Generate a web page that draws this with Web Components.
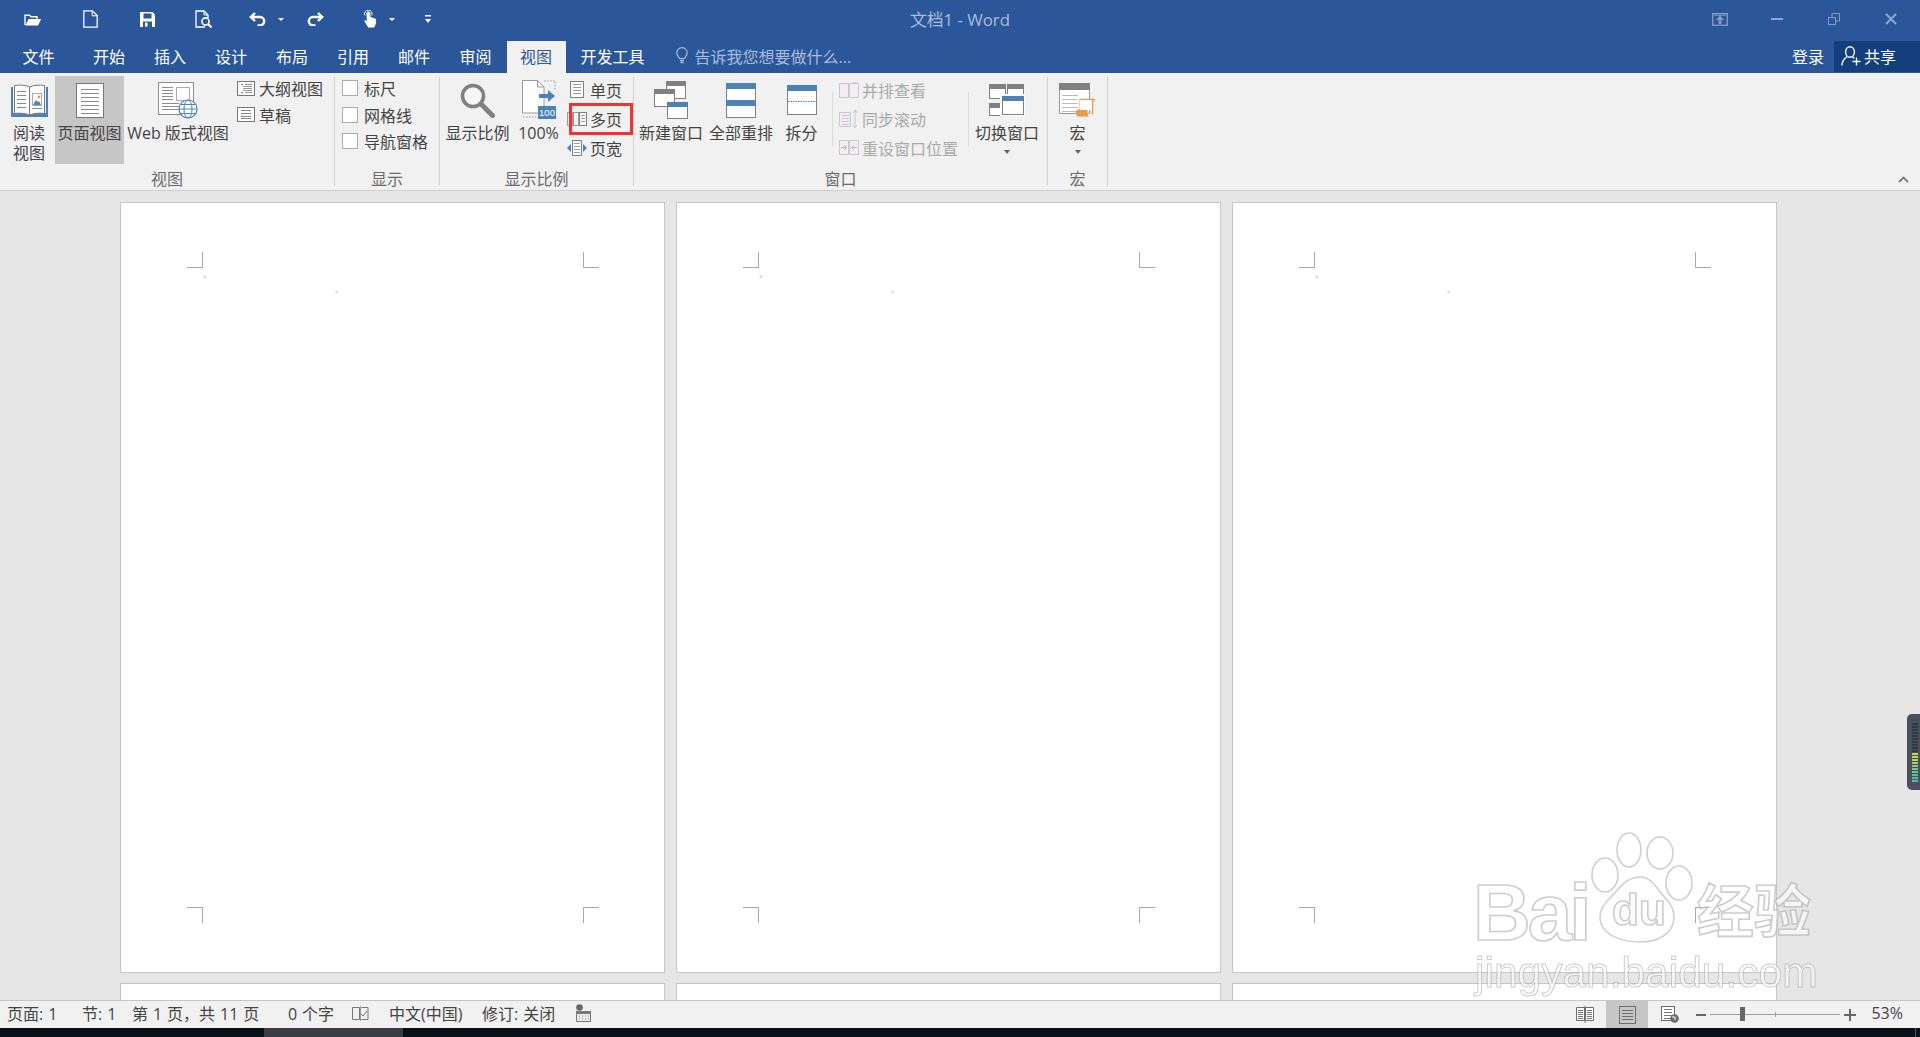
<!DOCTYPE html>
<html lang="zh"><head><meta charset="utf-8"><title>文档1 - Word</title>
<style>
html,body{margin:0;height:100%;overflow:hidden}
body{display:flex;flex-direction:column;position:relative;font:16px "Open Sans","Noto Sans CJK SC",sans-serif;color:#444;background:#e6e6e6}
</style></head><body>
<word-titlebar>
  <w-icon slot="qat" name="folder" style="margin-left:24px"></w-icon>
  <w-icon slot="qat" name="newdoc" style="margin-left:41px"></w-icon>
  <w-icon slot="qat" name="save" style="margin-left:42px"></w-icon>
  <w-icon slot="qat" name="preview" style="margin-left:40px"></w-icon>
  <w-icon slot="qat" name="undo" style="margin-left:36px"></w-icon>
  <w-icon slot="qat" name="caretw" style="margin-left:12px"></w-icon>
  <w-icon slot="qat" name="redo" style="margin-left:23px"></w-icon>
  <w-icon slot="qat" name="touch" style="margin-left:39px"></w-icon>
  <w-icon slot="qat" name="caretw" style="margin-left:12px"></w-icon>
  <w-icon slot="qat" name="custom" style="margin-left:30px"></w-icon>
  文档1 - Word
  <w-icon slot="win" name="ribbonopt" style="margin-right:43px"></w-icon>
  <w-icon slot="win" name="min" style="margin-right:45px"></w-icon>
  <w-icon slot="win" name="restore" style="margin-right:45px"></w-icon>
  <w-icon slot="win" name="close" style="margin-right:23px"></w-icon>
</word-titlebar>
<word-tabs>
  <w-tab style="--w:61px;margin-right:9.5px">文件</w-tab>
  <w-tab>开始</w-tab><w-tab>插入</w-tab><w-tab>设计</w-tab><w-tab>布局</w-tab><w-tab>引用</w-tab><w-tab>邮件</w-tab><w-tab style="--w:62px">审阅</w-tab>
  <w-tab active style="--w:59px">视图</w-tab>
  <w-tab style="--w:94px">开发工具</w-tab>
  <span slot="tell">告诉我您想要做什么...</span>
</word-tabs>
<word-ribbon>
  <rb-group label="视图" style="--g:334px;--p:4px">
    <rb-large style="--w:50px"><w-icon slot="icon" name="book"></w-icon>阅读<br>视图</rb-large>
    <rb-large active style="--w:69px;margin-left:1px"><w-icon slot="icon" name="page"></w-icon>页面视图</rb-large>
    <rb-large style="--w:106px;margin-left:1px"><w-icon slot="icon" name="web"></w-icon>Web 版式视图</rb-large>
    <rb-col style="margin-left:6px;--h:26.5px;--ic:18px;--gap:4px">
      <rb-small><w-icon slot="icon" name="outline"></w-icon>大纲视图</rb-small>
      <rb-small><w-icon slot="icon" name="draft"></w-icon>草稿</rb-small>
    </rb-col>
  </rb-group>
  <rb-sep></rb-sep>
  <rb-group label="显示" style="--g:104px;--p:7px">
    <rb-col style="--h:26.5px;--ic:16px;--gap:6px">
      <rb-small><rb-check slot="icon"></rb-check>标尺</rb-small>
      <rb-small><rb-check slot="icon"></rb-check>网格线</rb-small>
      <rb-small><rb-check slot="icon"></rb-check>导航窗格</rb-small>
    </rb-col>
  </rb-group>
  <rb-sep></rb-sep>
  <rb-group label="显示比例" style="--g:193px;--p:0px">
    <rb-large style="--w:75px"><w-icon slot="icon" name="magnifier"></w-icon>显示比例</rb-large>
    <rb-large style="--w:43px;margin-left:2px"><w-icon slot="icon" name="hundred"></w-icon>100%</rb-large>
    <rb-col style="margin-left:7px;--h:29px;--ic:20px;--gap:3px">
      <rb-small><w-icon slot="icon" name="onepage"></w-icon>单页</rb-small>
      <rb-small mark><w-icon slot="icon" name="multipage"></w-icon>多页</rb-small>
      <rb-small><w-icon slot="icon" name="pagewidth"></w-icon>页宽</rb-small>
    </rb-col>
  </rb-group>
  <rb-sep></rb-sep>
  <rb-group label="窗口" style="--g:413px;--p:1px">
    <rb-large style="--w:72px"><w-icon slot="icon" name="newwin"></w-icon>新建窗口</rb-large>
    <rb-large style="--w:68px"><w-icon slot="icon" name="arrange"></w-icon>全部重排</rb-large>
    <rb-large style="--w:53px;margin-left:0"><w-icon slot="icon" name="split"></w-icon>拆分</rb-large>
    <rb-innersep style="margin-left:4px"></rb-innersep>
    <rb-col style="margin-left:6px;--h:29px;--ic:20px;--gap:3px;color:#aaa">
      <rb-small><w-icon slot="icon" name="sidebyside"></w-icon>并排查看</rb-small>
      <rb-small><w-icon slot="icon" name="syncscroll"></w-icon>同步滚动</rb-small>
      <rb-small><w-icon slot="icon" name="resetpos"></w-icon>重设窗口位置</rb-small>
    </rb-col>
    <rb-innersep style="margin-left:10px"></rb-innersep>
    <rb-large caret style="--w:76px"><w-icon slot="icon" name="switchwin"></w-icon>切换窗口</rb-large>
  </rb-group>
  <rb-sep></rb-sep>
  <rb-group label="宏" style="--g:59px;--p:0px">
    <rb-large caret style="--w:59px"><w-icon slot="icon" name="macro"></w-icon>宏</rb-large>
  </rb-group>
  <rb-sep></rb-sep>
  <w-icon name="chevron" slot="" style="position:absolute;right:11px;bottom:7px"></w-icon>
</word-ribbon>
<word-workspace>
  <word-page></word-page><word-page></word-page><word-page></word-page>
  <word-page></word-page><word-page></word-page><word-page></word-page>
</word-workspace>
<word-statusbar>
  <span style="width:75px">页面: 1</span>
  <span style="width:50px">节: 1</span>
  <span style="width:156px">第 1 页，共 11 页</span>
  <span style="width:64px">0 个字</span>
  <span style="width:37px;display:flex"><w-icon name="proof"></w-icon></span>
  <span style="width:93px">中文(中国)</span>
  <span style="width:94px">修订: 关闭</span>
  <span style="display:flex"><w-icon name="track"></w-icon></span>
</word-statusbar>
<word-taskbar>22:31:18</word-taskbar>
<baidu-mark></baidu-mark>
<meter-widget></meter-widget>
<script>
const G='#808080',B='#4d82b8',W='#fff',D='#c9c9c9',DF='#f3eef5';
const lines=(x1,x2,ys,c)=>ys.map(y=>`<path d="M${x1} ${y}.5H${x2}" stroke="${c}"/>`).join('');
const svg=(w,h,b)=>`<svg xmlns="http://www.w3.org/2000/svg" width="${w}" height="${h}" viewBox="0 0 ${w} ${h}" fill="none">${b}</svg>`;
const win=(x,y,w,h,t)=>`<rect x="${x+.5}" y="${y+.5}" width="${w-1}" height="${h-1}" fill="#fff" stroke="#808080"/><rect x="${x}" y="${y}" width="${w}" height="5" fill="${t}"/>`;
const ICONS={
folder:svg(18,13,`<path d="M1 12V2.2h4.5l1.5 1.6h6v2.4" stroke="#fff" stroke-width="1.4"/><path d="M1.4 12.4 4.6 6h12.6l-3.2 6.4z" fill="#fff"/>`),
newdoc:svg(15,18,`<path d="M.8.8h8.6l4.8 4.8v11.6H.8z" stroke="#fff" stroke-width="1.3"/><path d="M9.2 1v4.8h5" stroke="#fff"/>`),
save:svg(15,15,`<path d="M0 0h12.5L15 2.5V15H0z" fill="#fff"/><rect x="3.5" y="1.5" width="8" height="5" fill="#2b579a"/><rect x="3" y="9.5" width="9" height="5.5" fill="#2b579a"/><rect x="5" y="10.5" width="2.5" height="4" fill="#fff"/>`),
preview:svg(18,18,`<path d="M10 17H1V1h8l4 4v3" stroke="#fff" stroke-width="1.3"/><path d="M9 1v4h4" stroke="#fff"/><circle cx="10.5" cy="11.5" r="3.6" stroke="#fff" stroke-width="1.6"/><path d="M13 14l3.6 3.4" stroke="#fff" stroke-width="2"/>`),
undo:svg(17,14,`<path d="M6 1 1.8 5 6 9" stroke="#fff" stroke-width="2.4"/><path d="M2.5 5H11a4.2 4.2 0 0 1 0 8.4H8.5" stroke="#fff" stroke-width="2.4"/>`),
redo:svg(17,14,`<path d="M11 1l4.2 4L11 9" stroke="#fff" stroke-width="2.4"/><path d="M14.5 5H6a4.2 4.2 0 0 0 0 8.4h2.5" stroke="#fff" stroke-width="2.4"/>`),
touch:svg(14,18,`<path d="M3.4 3.6a2 2 0 0 1 4 0V7l5.4 1.7.4 4.3-2 4.6H5.2L1.2 11l1.2-1 1.6 1z" fill="#fff"/><path d="M1.8 5.4a3.8 3.8 0 1 1 7 0" stroke="#fff"/>`),
caretw:svg(6,3,`<path d="M0 0h6L3 3z" fill="#fff"/>`),
custom:svg(6,8,`<path d="M0 0h6v1.4H0zM0 4h6L3 8z" fill="#fff"/>`),
ribbonopt:svg(16,13,`<rect x=".7" y=".7" width="14.6" height="11.6" stroke="#7f9ac4" stroke-width="1.4"/><path d="M8 2.5 12 7H9.5v4h-3V7H4z" fill="#7f9ac4"/><path d="M2 2.2h12" stroke="#7f9ac4"/>`),
min:svg(12,2,`<rect width="12" height="2" fill="#8ea6cb"/>`),
restore:svg(12,12,`<rect x=".5" y="4.5" width="7" height="7" stroke="#7f9ac4"/><path d="M4 4V.5h7.5V8H8" stroke="#7f9ac4"/>`),
close:svg(12,12,`<path d="M1 1l10 10M11 1 1 11" stroke="#8ea6cb" stroke-width="2"/>`),
bulb:svg(12,17,`<path d="M3.5 11.5C2.8 9.6 .8 8.6.8 5.8a5.2 5.2 0 0 1 10.4 0c0 2.8-2 3.8-2.7 5.7z" stroke="#a9bcd8" stroke-width="1.2"/><path d="M4 13.5h4M4.5 15.5h3" stroke="#a9bcd8" stroke-width="1.3"/>`),
person:svg(20,20,`<ellipse cx="9" cy="6" rx="4.4" ry="5.2" stroke="#fff" stroke-width="1.4"/><path d="M.8 19.5c.6-4.4 2.6-7.4 5.2-8.4M11.5 11c.6.3 1.3.8 1.8 1.4" stroke="#fff" stroke-width="1.4"/><path d="M11.5 15.5h8M15.5 11.5v8" stroke="#fff" stroke-width="1.3"/>`),
book:svg(37,33,`<path d="M0 3h2v26h33V3h2v30H0z" fill="${B}"/><path d="M3.5 1.5c5-.8 11-.4 15 1.5v28c-4-1.8-10-2.2-15-1.5z" fill="#fff" stroke="#777"/><path d="M33.5 1.5c-5-.8-11-.4-15 1.5v28c4-1.8 10-2.2 15-1.5z" fill="#fff" stroke="#777"/>${lines(6,15,[7,11,15,19,23],'#888')}<rect x="21.5" y="9.5" width="9" height="12" fill="#fff" stroke="#aaa"/><path d="M22 21l3-5 2 2 1-1 2 4z" fill="${B}"/><circle cx="28" cy="13" r="1.4" fill="#e59a4e"/>${lines(21,31,[24],'#888')}`),
page:svg(28,35,`<rect x=".5" y=".5" width="27" height="34" fill="#fff" stroke="#777"/>${lines(5,23,[6,10,14,18,22,26,30],'#8c8c8c')}`),
web:svg(40,37,`<rect x=".5" y=".5" width="35" height="32" fill="#fff" stroke="#8c8c8c"/><rect x="18.5" y="5.5" width="13" height="13" fill="#fff" stroke="#aaa"/>${lines(4,15,[5,8,11,14,17],'#8c8c8c')}${lines(4,21,[21,24,27],'#8c8c8c')}<circle cx="30" cy="27" r="9" fill="#fff" stroke="${B}" stroke-width="1.2"/><ellipse cx="30" cy="27" rx="4" ry="9" stroke="${B}"/><path d="M21 27h18M22.5 22.5h15M22.5 31.5h15" stroke="${B}"/>`),
outline:svg(18,15,`<rect x=".5" y=".5" width="17" height="14" fill="#fff" stroke="#777"/>${lines(4,6,[3,11],'#777')}${lines(6,15,[5,7,9],'#999')}<path d="M8 3.5h7M8 11.5h7" stroke="#999"/>`),
draft:svg(18,15,`<rect x=".5" y=".5" width="17" height="14" fill="#fff" stroke="#777"/>${lines(4,14,[3,6,9,11],'#888')}`),
magnifier:svg(35,35,`<circle cx="13" cy="13" r="10.5" fill="#fff" fill-opacity=".35" stroke="#808080" stroke-width="3.6"/><path d="M21 21 32.5 32.5" stroke="#808080" stroke-width="5" stroke-linecap="round"/>`),
hundred:svg(34,40,`<path d="M.5.5h15l6.5 6.5v26H.5z" fill="#fff" stroke="#999"/><path d="M15.5 1v6h6" stroke="#999"/><path d="M22 1h11v10M1 37h16" stroke="#999" stroke-dasharray="1.5 1.5"/><path d="M17 14h9v-4l7 6-7 6v-4h-9z" fill="${B}"/><rect x="16" y="26" width="18" height="13" fill="${B}"/><text x="25" y="36" text-anchor="middle" font-size="9.5" fill="#fff" font-family="Liberation Sans">100</text>`),
onepage:svg(20,17,`<rect x="3.5" y=".5" width="13" height="16" fill="#fff" stroke="#808080"/>${lines(6,14,[3,6,9,12],'#999')}`),
multipage:svg(20,14,`<rect x=".5" y=".5" width="5" height="13" fill="none" stroke="#999"/><rect x="6.5" y=".5" width="5" height="13" fill="none" stroke="#999"/><rect x="12.5" y=".5" width="7" height="13" fill="#fff" stroke="#808080"/>${lines(14,18,[3,6,9],'#999')}`),
pagewidth:svg(20,16,`<rect x="5.5" y=".5" width="9" height="15" fill="#fff" stroke="#808080"/>${lines(7,13,[3,6,9,12],'#999')}<path d="M4 4v8L0 8zM16 4v8l4-4z" fill="${B}"/>`),
newwin:svg(34,38,`<g>${win(12,0,20,18,'#808080')}${win(0,8,21,18,'#808080')}${win(13,21,21,17,B)}</g>`),
arrange:svg(30,35,`<rect x=".5" y=".5" width="29" height="34" fill="#fff" stroke="#808080"/><rect width="30" height="6" fill="${B}"/><rect y="17" width="30" height="6" fill="${B}"/>`),
split:svg(30,30,`<rect x=".5" y=".5" width="29" height="29" fill="#fff" stroke="#808080"/><rect width="30" height="6" fill="${B}"/><path d="M1 16.5h28" stroke="${B}" stroke-dasharray="1.5 1"/>`),
sidebyside:svg(20,16,`<path d="M.5 1.5h9v14h-9zM10.5 1.5h9v14h-9z" fill="${DF}" stroke="${D}"/><path d="M13 1l3-.5 3 1" stroke="${D}"/>`),
syncscroll:svg(20,20,`<path d="M.5 3.5h11v14H.5z" fill="${DF}" stroke="${D}"/>${lines(3,10,[6,9,12,15],D)}<path d="M16 1v18M14 4l2-3 2 3M14 16l2 3 2-3" stroke="${D}"/>`),
resetpos:svg(20,15,`<path d="M.5 .5h9v14h-9zM10.5 .5h9v14h-9z" fill="${DF}" stroke="${D}"/><path d="M2 7.5h5M5 5l2.5 2.5L5 10M18 7.5h-5M15 5l-2.5 2.5L15 10" stroke="#b5b5b5"/>`),
switchwin:svg(36,32,`${win(0,0,17,15,'#808080')}${win(18,0,17,15,'#808080')}${win(0,19,17,13,'#808080')}<rect x="12" y="11" width="24" height="20" fill="#fff" stroke="#fff" stroke-width="2"/>${win(13,12,22,19,B)}`),
macro:svg(37,34,`<path d="M.5.5h30v30H.5z" fill="#fff" stroke="#999"/><rect width="31" height="7" fill="#808080"/>${lines(3,19,[12,16,20,24,28],'#bbb')}<path d="M20.5 16.5h13v14h-1" stroke="#e59a4e" stroke-width="1.4"/><path d="M21 16v15" stroke="#e59a4e"/><path d="M33 15.5l3 .5-.5 3" fill="#e59a4e"/><path d="M17 29c0-1.5 1-2.5 2.5-2.5h9v3.5c0 2 1 3.5 2 3.5H19c-1.5 0-2-3-2-4.5z" fill="#e59a4e"/><rect x="21" y="17" width="12" height="10" fill="#fff"/>`),
chevron:svg(11,7,`<path d="M1 6l4.5-4.5L10 6" stroke="#7a7a7a" stroke-width="1.8"/>`),
proof:svg(17,15,`<path d="M.5 1.5h7v12h-7zM9.5 1.5H16v12H9.5" stroke="#777"/><path d="M9 8l2 2 4-5" stroke="#777"/><path d="M8.5 0v15" stroke="#999"/>`),
track:svg(15,18,`<circle cx="3.5" cy="3.5" r="3.3" fill="#666"/><path d="M1 7.5h13.5V17.5H.5V7" stroke="#777"/><rect x="1" y="7" width="14" height="3" fill="#777"/><path d="M3 12h1M6 12h1M9 12h1M12 12h1M3 15h1M6 15h1M9 15h1M12 15h1" stroke="#777"/>`),
sread:svg(18,17,`<path d="M.5 1.5h8v13h-8zM9.5 1.5h8v13h-8z" fill="#fff" stroke="#6d6d6d"/><path d="M9 0v17" stroke="#6d6d6d"/>${lines(2,7,[4,6,8,10,12],'#777')}${lines(11,16,[4,6,8,10,12],'#777')}`),
sprint:svg(17,18,`<rect x=".5" y=".5" width="16" height="17" fill="none" stroke="#6d6d6d"/>${lines(3,14,[4,7,10,13],'#6d6d6d')}`),
sweb:svg(18,17,`<rect x=".5" y=".5" width="13" height="14" fill="#fff" stroke="#6d6d6d"/>${lines(3,11,[3,6,9,12],'#777')}<circle cx="13.5" cy="12.5" r="4.3" fill="#6d6d6d"/><path d="M11 11h3v3" stroke="#fff"/>`)
};
function def(name,css,html,init){
  customElements.define(name,class extends HTMLElement{
    constructor(){super();const r=this.attachShadow({mode:'open'});r.innerHTML=`<style>${css}</style>`+(typeof html==='function'?html(this):html);}
    connectedCallback(){if(init)init(this);}
  });
}
customElements.define('w-icon',class extends HTMLElement{
  connectedCallback(){if(this.shadowRoot)return;const r=this.attachShadow({mode:'open'});r.innerHTML=`<style>:host{display:block;line-height:0;flex:none}svg{display:block}</style>`+(ICONS[this.getAttribute('name')]||'');}
});
def('word-titlebar',`:host{display:grid;grid-template-columns:1fr auto 1fr;align-items:center;height:41px;padding-bottom:3px;box-sizing:border-box;background:#2b579a;color:#a9bcd8;font-size:16.8px;flex:none}
.q,.w{display:flex;align-items:center}.w{justify-content:flex-end}`,
`<div class="q"><slot name="qat"></slot></div><div><slot></slot></div><div class="w"><slot name="win"></slot></div>`);
def('word-tabs',`:host{display:flex;align-items:stretch;height:32px;background:#2b579a;padding-left:8px;flex:none}
.t{display:flex;align-items:center;gap:7px;margin-left:16px;padding-bottom:3px;color:#a9bcd8;white-space:nowrap}
.r{margin-left:auto;display:flex;align-items:stretch;color:#fff}
.l{display:flex;align-items:center;margin-right:10px;padding-bottom:3px}
.s{display:flex;align-items:center;gap:3px;width:86px;box-sizing:border-box;padding:0 0 2px 7px;background:#133f7c;margin-bottom:1px}`,
`<slot></slot><div class="t"><w-icon name="bulb"></w-icon><slot name="tell"></slot></div>
<div class="r"><div class="l">登录</div><div class="s"><w-icon name="person"></w-icon>共享</div></div>`);
def('w-tab',`:host{display:flex;align-items:center;justify-content:center;width:var(--w,61px);padding-bottom:3px;box-sizing:border-box;flex:none;color:#fff;white-space:nowrap}
:host([active]){background:#f1f1f1;color:#2b579a}`,`<slot></slot>`);
def('word-ribbon',`:host{display:flex;position:relative;height:117px;background:#f1f1f1;border-bottom:1px solid #cfcfcf;box-sizing:content-box;padding-top:0;flex:none;color:#444}`,`<slot></slot>`);
def('rb-group',`:host{display:grid;grid-template-rows:1fr 22px;width:var(--g);flex:none;height:117px;padding-top:3px;box-sizing:border-box}
.c{display:flex;align-items:flex-start;padding-left:var(--p);min-height:0}
.l{text-align:center;line-height:22px;color:#6b6b6b;font-size:16px}`,
(e)=>`<div class="c"><slot></slot></div><div class="l">${e.getAttribute('label')}</div>`);
def('rb-sep',`:host{display:block;width:1px;background:#d2d2d2;height:109px;margin-top:4px;flex:none}`,``);
def('rb-innersep',`:host{display:block;width:1px;background:#dcdcdc;height:55px;margin-top:16px;flex:none}`,``);
def('rb-large',`:host{display:flex;flex-direction:column;align-items:center;width:var(--w);height:88px;flex:none;white-space:nowrap}
:host([active]){background:#c6c6c6}
.i{height:46px;padding-top:1px;box-sizing:content-box;display:flex;align-items:center;justify-content:center}
.t{line-height:20px;text-align:center}
.c{width:0;height:0;border:3.5px solid transparent;border-top:4px solid #666;border-bottom:0;margin-top:7px;display:none}
:host([caret]) .c{display:block}`,
`<div class="i"><slot name="icon"></slot></div><div class="t"><slot></slot></div><div class="c"></div>`);
def('rb-col',`:host{display:flex;flex-direction:column;margin-top:-1px;flex:none}`,`<slot></slot>`);
def('rb-small',`:host{display:flex;align-items:center;height:var(--h);gap:var(--gap);position:relative;white-space:nowrap}
.i{width:var(--ic);display:flex;justify-content:center;align-items:center;flex:none}
:host([mark])::after{content:"";position:absolute;left:2px;width:64px;top:-1px;bottom:-2px;border:3px solid #f33333;box-sizing:border-box}`,
`<div class="i"><slot name="icon"></slot></div><slot></slot>`);
def('rb-check',`:host{display:block;width:16px;height:16px;box-sizing:border-box;border:1px solid #ababab;background:#fff}`,``);
def('word-workspace',`:host{flex:1;min-height:0;overflow:hidden;display:grid;grid-template-columns:repeat(3,545px);grid-auto-rows:771px;gap:10px 11px;padding:11px 0 0 120px;background:#e6e6e6}`,`<slot></slot>`);
def('word-page',`:host{display:block;position:relative;background:#fff;border:1px solid #c6c6c6;box-sizing:border-box}
i{position:absolute;display:block;width:16px;height:16px;box-sizing:border-box;border:0 solid #a8a8a8}
.tl{left:66px;top:49px;border-right-width:1px;border-bottom-width:1px}
.tr{left:462px;top:49px;border-left-width:1px;border-bottom-width:1px}
.bl{left:66px;top:704px;border-right-width:1px;border-top-width:1px}
.br{left:462px;top:704px;border-left-width:1px;border-top-width:1px}
b{position:absolute;display:block;width:4px;height:3px;background:linear-gradient(135deg,transparent 45%,#dcdcdc 50%)}`,
`<i class="tl"></i><i class="tr"></i><i class="bl"></i><i class="br"></i><b style="left:81px;top:72px"></b><b style="left:213px;top:87px"></b>`);
def('word-statusbar',`:host{display:flex;align-items:center;height:28px;box-sizing:border-box;border-top:1px solid #c6c6c6;background:#f1f1f1;padding:0 0 0 7px;font-size:16px;word-spacing:.8px;color:#444;flex:none;white-space:nowrap}
::slotted(span){display:block;flex:none;margin-top:-3px}
.r{margin-left:auto;display:flex;align-items:center;align-self:stretch;padding-right:17px}
.a{display:flex;align-items:center;justify-content:center;align-self:stretch;width:42px;background:#c6c6c6;margin:0 13px 0 12px}
.m{width:10px;height:2px;background:#666;margin-left:4px}
.tr{width:130px;height:1px;background:#a0a0a0;margin:0 4px;position:relative}
.tr u{position:absolute;left:65px;top:-2px;width:1px;height:5px;background:#a0a0a0}
.tr s{position:absolute;left:30px;top:-7px;width:5px;height:14px;background:#666}
.p{position:relative;width:12px;height:12px;background:linear-gradient(#666,#666) center/12px 2px no-repeat,linear-gradient(#666,#666) center/2px 12px no-repeat}
.z{margin-left:15px;margin-top:-3px}`,
`<slot></slot><div class="r"><w-icon name="sread"></w-icon><div class="a"><w-icon name="sprint"></w-icon></div><w-icon name="sweb"></w-icon>
<div style="width:13px"></div><div class="m"></div><div class="tr"><u></u><s></s></div><div class="p"></div><div class="z">53%</div></div>`);
def('word-taskbar',`:host{display:flex;height:9px;background:#0b1118;overflow:hidden;color:#fff;font-size:15px;line-height:20px;flex:none}
.a{width:139px;margin-left:264px;background:#3a3d42}
.c{margin-left:auto;margin-right:114px;padding-top:3px}
.l{width:1px;background:#555;margin-right:4px}`,
`<div class="a"></div><div class="c"><slot></slot></div><div class="l"></div>`);
def('baidu-mark',`:host{position:absolute;left:1470px;top:825px;width:350px;height:175px;pointer-events:none;filter:blur(.5px);font-family:"Liberation Sans","Noto Sans CJK SC",sans-serif;font-weight:700;z-index:5}
span{position:absolute;white-space:nowrap;color:rgba(255,255,255,.6);-webkit-text-stroke:1.6px rgba(170,170,170,.6);line-height:1}
svg{position:absolute;left:0;top:0}
.bai{left:3px;top:48px;font-size:80px;letter-spacing:-3px}
.du{left:142px;top:63px;font-size:44px;letter-spacing:0}
.cn{left:227px;top:59px;font-size:57px;letter-spacing:0}
.url{left:5px;top:127px;font-size:42.5px;font-weight:400;-webkit-text-stroke-width:1px}`,
`<svg width="350" height="175" viewBox="0 0 350 175"><g fill="rgba(255,255,255,.55)" stroke="rgba(175,175,175,.6)" stroke-width="1.6">
<ellipse cx="135" cy="50" rx="13" ry="17"/><ellipse cx="159" cy="25" rx="12" ry="17"/><ellipse cx="190" cy="28" rx="13" ry="16"/><ellipse cx="209" cy="58" rx="13" ry="17"/>
<path d="M170 52c12 0 17 12 26 22 6 6 8 12 8 18 0 18-18 25-34 25s-40-6-40-25c0-7 3-12 9-18 10-10 17-22 31-22z"/></g></svg>
<span class="bai">Bai</span><span class="du">du</span><span class="cn">经验</span><span class="url">jingyan.baidu.com</span>`);
def('meter-widget',`:host{position:absolute;right:0;top:714px;width:13px;height:76px;background:#4b505e;border-radius:5px 0 0 5px;display:flex;flex-direction:column;gap:1px;padding:9px 2px 0 5px;box-sizing:border-box;z-index:6}
i{display:block;height:2px;flex:none}`,
()=>{const c=['#333742','#333742','#333742','#333742','#333742','#333742','#333742','#333742','#333742','#333742','#d6d24c','#c9d455','#b5d05c','#a6cd66','#8ec977','#7fc684','#6cc390','#59c09b','#52bea2','#4dbca8'];return c.map(x=>`<i style="background:${x}"></i>`).join('');});
</script>
</body></html>
